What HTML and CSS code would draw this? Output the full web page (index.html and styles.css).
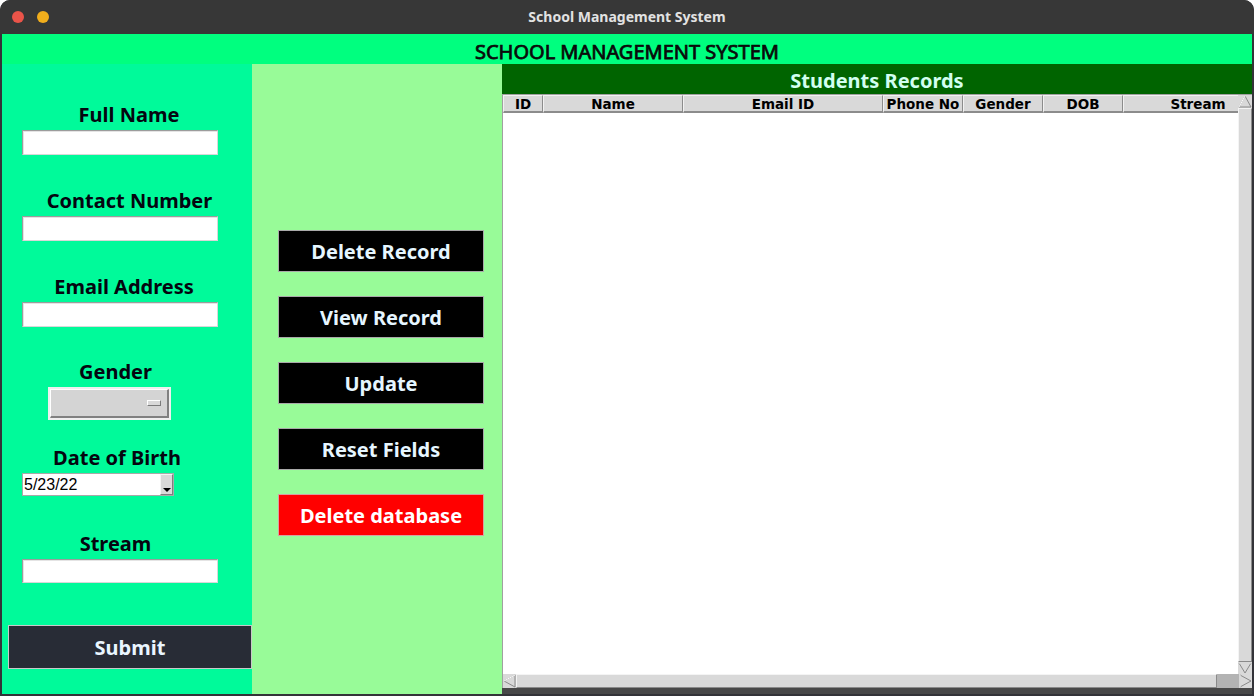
FILE: index.html
```html
<!DOCTYPE html>
<html lang="en">
<head>
<meta charset="utf-8">
<title>School Management System</title>
<link rel="stylesheet" href="styles.css">
</head>
<body>
<div class="window">
  <div class="titlebar">
    <div class="lights"><span class="light red"></span><span class="light yellow"></span></div>
    <div class="title">School Management System</div>
    <div></div>
  </div>
  <div class="app">
    <header class="banner">SCHOOL MANAGEMENT SYSTEM</header>
    <main class="main">
      <section class="left">
        <div class="field f-name">
          <div class="label w254">Full Name</div>
          <div class="entry"></div>
        </div>
        <div class="field f-contact">
          <div class="label w258">Contact Number</div>
          <div class="entry"></div>
        </div>
        <div class="field f-email">
          <div class="label w244">Email Address</div>
          <div class="entry"></div>
        </div>
        <div class="field f-gender">
          <div class="label w227">Gender</div>
          <div class="combo"><div class="combo-face"><span class="combo-ind"></span></div></div>
        </div>
        <div class="field f-dob">
          <div class="label w230">Date of Birth</div>
          <div class="date"><span class="date-text">5/23/22</span><span class="date-btn"><span class="tri"></span></span></div>
        </div>
        <div class="field f-stream">
          <div class="label w227">Stream</div>
          <div class="entry"></div>
        </div>
        <div class="submit">Submit</div>
      </section>
      <section class="middle">
        <div class="btn">Delete Record</div>
        <div class="btn">View Record</div>
        <div class="btn">Update</div>
        <div class="btn">Reset Fields</div>
        <div class="btn danger">Delete database</div>
      </section>
      <section class="right">
        <div class="rec-title">Students Records</div>
        <div class="table">
          <div class="tree">
            <div class="heads">
              <div class="th c-id">ID</div>
              <div class="th c-name">Name</div>
              <div class="th c-email">Email ID</div>
              <div class="th c-80">Phone No</div>
              <div class="th c-80">Gender</div>
              <div class="th c-80">DOB</div>
              <div class="th c-stream">Stream</div>
            </div>
            <div class="tbody"></div>
          </div>
          <div class="vscroll">
            <svg class="arrow-v" width="14" height="13" viewBox="0 0 14 13"><polygon points="7,1 13,12 1,12" fill="#d9d9d9" stroke="#8a8a8a" stroke-width="1"/><line x1="7" y1="1" x2="1" y2="12" stroke="#ffffff" stroke-width="1"/></svg>
            <div class="vthumb"></div>
            <svg class="arrow-v" width="14" height="12" viewBox="0 0 14 12"><polygon points="1,1 13,1 7,11" fill="#d9d9d9" stroke="#8a8a8a" stroke-width="1"/><line x1="1" y1="1" x2="13" y2="1" stroke="#ffffff" stroke-width="1"/></svg>
          </div>
          <div class="hscroll">
            <svg class="arrow-h" width="13" height="14" viewBox="0 0 13 14"><polygon points="1,7 12,1 12,13" fill="#d9d9d9" stroke="#8a8a8a" stroke-width="1"/><line x1="1" y1="7" x2="12" y2="1" stroke="#ffffff" stroke-width="1"/></svg>
            <div class="hthumb"></div>
            <div class="htrough"></div>
            <svg class="arrow-h" width="13" height="14" viewBox="0 0 13 14"><polygon points="1,1 12,7 1,13" fill="#d9d9d9" stroke="#8a8a8a" stroke-width="1"/><line x1="1" y1="1" x2="1" y2="13" stroke="#ffffff" stroke-width="1"/></svg>
          </div>
        </div>
      </section>
    </main>
  </div>
</div>
</body>
</html>
```

FILE: styles.css
```css
* { box-sizing: border-box; }

html, body {
  margin: 0;
  padding: 0;
  background: #ffffff;
}

body {
  font-family: "Noto Sans", "DejaVu Sans", sans-serif;
}

.window {
  width: 1254px;
  height: 696px;
  border-radius: 10px 10px 0 0;
  overflow: hidden;
  background: #333338;
  display: flex;
  flex-direction: column;
}

.titlebar {
  height: 34px;
  flex: none;
  background: #373737;
  display: grid;
  grid-template-columns: 1fr auto 1fr;
  align-items: center;
}

.lights {
  display: flex;
  gap: 13px;
  padding-left: 12px;
}

.light {
  width: 12px;
  height: 12px;
  border-radius: 50%;
  display: block;
}

.red { background: #ea5449; }
.yellow { background: #f1ae1c; }

.title {
  color: #e2e2e2;
  font-size: 14px;
  font-weight: 700;
  padding-bottom: 1px;
}

.app {
  flex: 1;
  display: flex;
  flex-direction: column;
  margin: 0 2px 2px 2px;
  min-height: 0;
}

.banner {
  height: 30px;
  flex: none;
  background: #00ff7f;
  color: #0a0a0a;
  font-size: 20px;
  font-weight: 400;
  -webkit-text-stroke: 0.75px #0a0a0a;
  text-align: center;
  line-height: 24px;
  padding-top: 6px;
}

.main {
  flex: 1;
  display: flex;
  min-height: 0;
}

/* LEFT FORM */
.left {
  width: 250px;
  flex: none;
  background: #00fa9a;
  display: flex;
  flex-direction: column;
  padding-top: 39px;
}

.field {
  display: flex;
  flex-direction: column;
  align-items: flex-start;
  gap: 3px;
}

.f-contact, .f-email { margin-top: 34px; }
.f-gender { margin-top: 33px; }
.f-dob { margin-top: 26px; }
.f-stream { margin-top: 36px; }

.label {
  font-size: 20px;
  font-weight: 700;
  line-height: 24px;
  color: #050510;
  text-align: center;
  white-space: nowrap;
}

.w254 { width: 254px; }
.w258 { width: 255px; }
.w244 { width: 244px; }
.w227 { width: 227px; }
.w230 { width: 230px; }

.entry {
  margin-left: 20px;
  width: 196px;
  height: 25px;
  background: #ffffff;
  border: 1px solid;
  border-color: #9c9c9c #d8d8d8 #d8d8d8 #9c9c9c;
  box-shadow: inset 1px 1px 0 #e4e4e4;
}

.f-stream .entry { height: 24px; }

.combo {
  margin-left: 46px;
  width: 123px;
  height: 33px;
  border: 2px solid #efefef;
  background: #d4d4d4;
}

.combo-face {
  height: 100%;
  border-style: solid;
  border-width: 1px 2px 2px 1px;
  border-color: #ffffff #808080 #808080 #ffffff;
  display: flex;
  align-items: center;
  justify-content: flex-end;
  padding-right: 6px;
}

.combo-ind {
  width: 14px;
  height: 6px;
  background: #d9d9d9;
  border-style: solid;
  border-width: 1px;
  border-color: #ffffff #7a7a7a #7a7a7a #ffffff;
  display: block;
}

.date {
  margin-left: 20px;
  width: 152px;
  height: 23px;
  background: #ffffff;
  border: 1px solid #a8a8a8;
  display: flex;
  align-items: stretch;
}

.date-text {
  flex: 1;
  font-family: "Liberation Sans", Arial, sans-serif;
  font-size: 16px;
  line-height: 21px;
  color: #000000;
  padding-left: 1px;
}

.date-btn {
  width: 13px;
  background: #d9d9d9;
  border-style: solid;
  border-width: 1px;
  border-color: #f4f4f4 #7f7f7f #7f7f7f #f4f4f4;
  display: flex;
  align-items: flex-end;
  justify-content: center;
  padding-bottom: 2px;
}

.tri {
  width: 0;
  height: 0;
  border-left: 4px solid transparent;
  border-right: 4px solid transparent;
  border-top: 4px solid #000000;
  display: block;
}

.submit {
  margin-top: 42px;
  margin-left: 6px;
  width: 244px;
  height: 44px;
  background: #282c36;
  border: 1px solid #c8c8c8;
  color: #eaf6ff;
  font-size: 20px;
  font-weight: 700;
  display: flex;
  align-items: center;
  justify-content: center;
}

/* MIDDLE BUTTONS */
.middle {
  width: 250px;
  flex: none;
  background: #98fb98;
  display: flex;
  flex-direction: column;
  gap: 24px;
  padding-top: 166px;
  padding-left: 26px;
}

.btn {
  width: 206px;
  height: 42px;
  background: #000000;
  border: 1px solid #a9a9a9;
  color: #e6f6ff;
  font-size: 20px;
  font-weight: 700;
  display: flex;
  align-items: center;
  justify-content: center;
}

.btn.danger {
  background: #ff0000;
  border-color: #d8a0a0;
  color: #ffffff;
}

/* RIGHT TABLE */
.right {
  flex: 1;
  background: #484848;
  display: flex;
  flex-direction: column;
  min-width: 0;
}

.rec-title {
  height: 30px;
  flex: none;
  background: #006400;
  color: #d2fff0;
  font-size: 20px;
  font-weight: 700;
  text-align: center;
  line-height: 26px;
  padding-top: 4px;
}

.table {
  flex: 1;
  margin-bottom: 6px;
  display: grid;
  grid-template-columns: 1fr 14px;
  grid-template-rows: 1fr 14px;
  border-top: 1px solid #a0a0a0;
  border-left: 1px solid #a0a0a0;
  background: #ffffff;
  min-height: 0;
}

.tree {
  overflow: hidden;
  display: flex;
  flex-direction: column;
  min-width: 0;
}

.heads {
  display: flex;
  height: 18px;
  flex: none;
}

.th {
  flex: none;
  height: 18px;
  background: #d9d9d9;
  border-style: solid;
  border-width: 1px 1px 2px 1px;
  border-color: #f2f2f2 #8c8c8c #8c8c8c #f2f2f2;
  font-family: "DejaVu Sans", sans-serif;
  font-size: 13.5px;
  font-weight: 700;
  line-height: 16px;
  color: #000000;
  text-align: center;
  white-space: nowrap;
}

.c-id { width: 40px; }
.c-name { width: 140px; }
.c-email { width: 200px; }
.c-80 { width: 80px; }
.c-stream { width: 150px; }

.tbody {
  flex: 1;
  background: #ffffff;
}

.vscroll {
  background: #d9d9d9;
  display: flex;
  flex-direction: column;
}

.arrow-v, .arrow-h {
  display: block;
  flex: none;
}

.vthumb {
  flex: 1;
  background: #d9d9d9;
  border-style: solid;
  border-width: 1px;
  border-color: #f4f4f4 #8a8a8a #8a8a8a #f4f4f4;
}

.hscroll {
  grid-column: 1 / 3;
  display: flex;
  background: #d9d9d9;
}

.hthumb {
  width: 701px;
  flex: none;
  background: #d9d9d9;
  border-style: solid;
  border-width: 1px;
  border-color: #f4f4f4 #8a8a8a #8a8a8a #f4f4f4;
}

.htrough {
  flex: 1;
  background: #b3b3b3;
}
```
